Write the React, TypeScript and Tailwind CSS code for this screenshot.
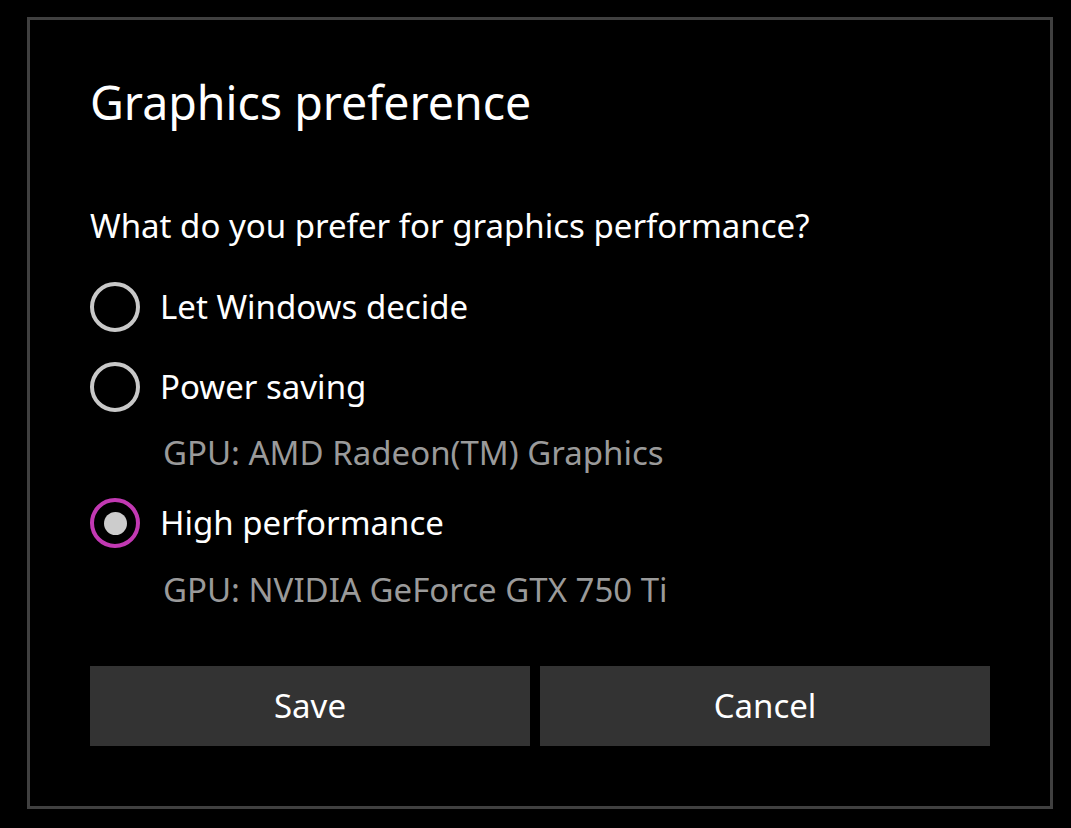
import React from "react";

const font = { fontFamily: '"Segoe UI", "Noto Sans", "Open Sans", sans-serif' };

interface RadioRowProps {
  label: string;
  checked?: boolean;
  className?: string;
}

const RadioRow: React.FC<RadioRowProps> = ({ label, checked, className }) => {
  return (
    <div className={`flex items-center h-[50px] ${className ?? ""}`}>
      {checked ? (
        <div className="w-[50px] h-[50px] rounded-full border-[4px] border-[#c239b3] flex items-center justify-center shrink-0">
          <div className="w-[23px] h-[23px] rounded-full bg-[#cccccc]"></div>
        </div>
      ) : (
        <div className="w-[50px] h-[50px] rounded-full border-[4px] border-[#c8c8c8] shrink-0"></div>
      )}
      <span className="ml-[20px] text-[33px] leading-[40px] text-white">{label}</span>
    </div>
  );
};

const App: React.FC = () => {
  return (
    <div className="w-[1071px] h-[828px] bg-black pl-[27px] pt-[17px]" style={font}>
      <div className="w-[1026px] h-[792px] border-[3px] border-[#404040] px-[60px] flex flex-col">
        <div className="mt-[52px] text-[46.5px] leading-[60px] text-white">Graphics preference</div>

        <div className="mt-[74px] text-[33px] leading-[40px] text-white">
          What do you prefer for graphics performance?
        </div>

        <RadioRow className="mt-[36px]" label="Let Windows decide" />
        <RadioRow className="mt-[30px]" label="Power saving" />
        <div className="mt-[21px] pl-[73px] text-[33px] leading-[40px] text-[#9a9a9a]">
          GPU: AMD Radeon(TM) Graphics
        </div>
        <RadioRow className="mt-[25px]" label="High performance" checked />
        <div className="mt-[22px] pl-[73px] text-[33px] leading-[40px] text-[#9a9a9a]">
          GPU: NVIDIA GeForce GTX 750 Ti
        </div>

        <div className="mt-[56px] flex gap-[10px]">
          <button className="w-[440px] h-[80px] bg-[#333333] text-white text-[33px]">Save</button>
          <button className="w-[450px] h-[80px] bg-[#333333] text-white text-[33px]">Cancel</button>
        </div>
      </div>
    </div>
  );
};

export default App;
